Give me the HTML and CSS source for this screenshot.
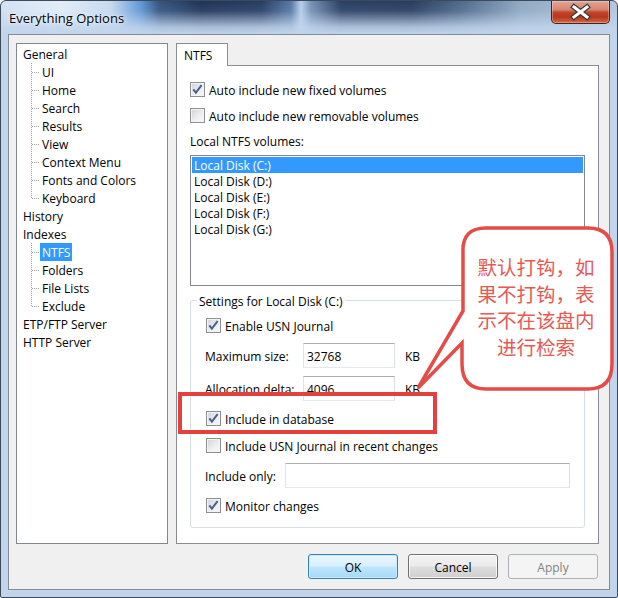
FILE: index.html
```html
<!DOCTYPE html>
<html lang="en">
<head>
<meta charset="utf-8">
<title>Everything Options</title>
<link rel="stylesheet" href="styles.css">
</head>
<body>
<div class="window">
  <div class="titlebar">
    <div class="title">Everything Options</div>
    <div class="close">
      <svg width="59" height="23" viewBox="0 0 59 23">
        <path d="M23 7 L36 17 M36 7 L23 17" stroke="#3a3a3a" stroke-width="5.5" stroke-linecap="square" fill="none"/>
        <path d="M23 7 L36 17 M36 7 L23 17" stroke="#ffffff" stroke-width="3" stroke-linecap="square" fill="none"/>
      </svg>
    </div>
  </div>
  <div class="client">
    <div class="main">
      <div class="tree">
        <ul class="tree-root">
          <li><div class="row"><span class="label">General</span></div>
            <ul class="sub">
              <li><div class="row"><span class="label">UI</span></div></li>
              <li><div class="row"><span class="label">Home</span></div></li>
              <li><div class="row"><span class="label">Search</span></div></li>
              <li><div class="row"><span class="label">Results</span></div></li>
              <li><div class="row"><span class="label">View</span></div></li>
              <li><div class="row"><span class="label">Context Menu</span></div></li>
              <li><div class="row"><span class="label">Fonts and Colors</span></div></li>
              <li><div class="row"><span class="label">Keyboard</span></div></li>
            </ul>
          </li>
          <li><div class="row"><span class="label">History</span></div></li>
          <li><div class="row"><span class="label">Indexes</span></div>
            <ul class="sub">
              <li><div class="row"><span class="label selected">NTFS</span></div></li>
              <li><div class="row"><span class="label">Folders</span></div></li>
              <li><div class="row"><span class="label">File Lists</span></div></li>
              <li><div class="row"><span class="label">Exclude</span></div></li>
            </ul>
          </li>
          <li><div class="row"><span class="label">ETP/FTP Server</span></div></li>
          <li><div class="row"><span class="label">HTTP Server</span></div></li>
        </ul>
      </div>
      <div class="tabctl">
        <div class="tabstrip"><div class="tab">NTFS</div></div>
        <div class="panel">
          <div class="cb-row">
            <span class="cb"><svg width="13" height="13" viewBox="0 0 13 13"><path d="M2.3 6.3 L4.9 9.6 L10.6 2.2" fill="none" stroke="#4b5f8f" stroke-width="2"/></svg></span>
            <span class="txt">Auto include new fixed volumes</span>
          </div>
          <div class="cb-row mt8">
            <span class="cb"></span>
            <span class="txt">Auto include new removable volumes</span>
          </div>
          <div class="caption">Local NTFS volumes:</div>
          <div class="list">
            <div class="item selected">Local Disk (C:)</div>
            <div class="item">Local Disk (D:)</div>
            <div class="item">Local Disk (E:)</div>
            <div class="item">Local Disk (F:)</div>
            <div class="item">Local Disk (G:)</div>
          </div>
          <div class="group">
            <div class="group-title">Settings for Local Disk (C:)</div>
            <div class="cb-row gcb">
              <span class="cb"><svg width="13" height="13" viewBox="0 0 13 13"><path d="M2.3 6.3 L4.9 9.6 L10.6 2.2" fill="none" stroke="#4b5f8f" stroke-width="2"/></svg></span>
              <span class="txt">Enable USN Journal</span>
            </div>
            <div class="field-row">
              <span class="field-label txt">Maximum size:</span>
              <span class="input w92">32768</span>
              <span class="unit txt">KB</span>
            </div>
            <div class="field-row">
              <span class="field-label txt">Allocation delta:</span>
              <span class="input w92">4096</span>
              <span class="unit txt">KB</span>
            </div>
            <div class="cb-row gcb">
              <span class="cb"><svg width="13" height="13" viewBox="0 0 13 13"><path d="M2.3 6.3 L4.9 9.6 L10.6 2.2" fill="none" stroke="#4b5f8f" stroke-width="2"/></svg></span>
              <span class="txt">Include in database</span>
            </div>
            <div class="cb-row gcb">
              <span class="cb"></span>
              <span class="txt">Include USN Journal in recent changes</span>
            </div>
            <div class="field-row">
              <span class="field-label short txt">Include only:</span>
              <span class="input w285"></span>
            </div>
            <div class="cb-row gcb">
              <span class="cb"><svg width="13" height="13" viewBox="0 0 13 13"><path d="M2.3 6.3 L4.9 9.6 L10.6 2.2" fill="none" stroke="#4b5f8f" stroke-width="2"/></svg></span>
              <span class="txt">Monitor changes</span>
            </div>
          </div>
        </div>
      </div>
    </div>
    <div class="buttons">
      <div class="btn btn-default">OK</div>
      <div class="btn">Cancel</div>
      <div class="btn btn-disabled">Apply</div>
    </div>
  </div>

  <div class="annot-box"></div>
  <svg class="callout" width="618" height="598" viewBox="0 0 618 598">
    <path d="M486 228 H588 Q612 228 612 252 V364 Q612 389 588 389 H486 Q462 389 462 364 V343 L418 388 L463 311 V252 Q462 228 486 228 Z" fill="#ffffff" stroke="#e54c48" stroke-width="3.5" stroke-linejoin="miter"/>
  </svg>
  <div class="callout-text">默认打钩，如<br>果不打钩，表<br>示不在该盘内<br>进行检索</div>
</div>
</body>
</html>
```

FILE: styles.css
```css
* { box-sizing: border-box; }
html, body { margin: 0; padding: 0; }
body {
  width: 618px;
  height: 598px;
  overflow: hidden;
  font-family: "Open Sans", "Noto Sans", sans-serif;
  font-size: 12px;
  color: #000;
  background: #fff;
}

.window {
  position: relative;
  width: 618px;
  height: 598px;
  border: 1px solid #3d4a5a;
  border-radius: 6px 6px 2px 2px;
  padding: 0 7px 7px 7px;
  display: flex;
  flex-direction: column;
  background:
    linear-gradient(to bottom, rgba(194,213,237,0) 0px, rgba(194,213,237,0.1) 10px, rgba(194,213,237,0.85) 26px, #c2d5ed 34px),
    linear-gradient(to right, #d3e2f3 0px, #e4eef9 60px, #c6daf0 110px, #5f96d6 140px, #34547f 158px, #1f3356 200px, #263c62 260px, #5677a6 290px, #b9cfea 300px, #7791b6 310px, #2a4062 340px, #283c5e 410px, #4f6a8a 460px, #92a9c3 520px, #b5c8df 618px);
}

.titlebar {
  height: 33px;
  margin: 0 -7px;
  padding-left: 8px;
  display: flex;
  align-items: flex-start;
}
.title {
  margin-top: 8px;
  line-height: 18px;
  font-size: 13px;
  color: #000;
  text-shadow: 0 0 6px rgba(255,255,255,0.9), 0 0 2px rgba(255,255,255,0.7);
}
.close {
  margin-left: auto;
  margin-right: 7px;
  width: 59px;
  height: 23px;
  border: 1px solid #4b2018;
  border-top: none;
  border-radius: 0 0 5px 5px;
  background: linear-gradient(to bottom, #e3a393 0%, #d78873 38%, #c2452b 52%, #b8361c 72%, #d06a46 100%);
  box-shadow: inset 0 0 0 1px rgba(255,255,255,0.3);
}
.close svg { display: block; margin: -1px 0 0 -1px; }

.client {
  height: 556px;
  border: 1px solid #828b97;
  background: #f0f0f0;
  padding: 8px 9px 0 7px;
  display: flex;
  flex-direction: column;
}
.main {
  display: flex;
  gap: 8px;
  height: 501px;
}

/* tree */
.tree {
  width: 152px;
  height: 501px;
  border: 1px solid #828790;
  background: #fff;
  padding-top: 1px;
}
.tree ul { list-style: none; margin: 0; padding: 0; }
.row {
  display: flex;
  align-items: center;
  height: 18px;
  padding-left: 4px;
}
.label {
  padding: 2px 2px 0 2px;
  line-height: 16px;
  white-space: nowrap;
}
.sub {
  background: repeating-linear-gradient(to bottom, #a0a0a0 0 1px, transparent 1px 2px) 14px 0 / 1px calc(100% - 9px) no-repeat;
}
.sub .row { padding-left: 15px; }
.sub .row::before {
  content: "";
  flex: none;
  width: 8px;
  height: 1px;
  background: repeating-linear-gradient(to right, #a0a0a0 0 1px, transparent 1px 2px);
}
.selected { background: #3399ff; color: #fff; }

/* tab */
.tabctl {
  width: 423px;
  display: flex;
  flex-direction: column;
}
.tabstrip { height: 22px; display: flex; }
.tab {
  width: 52px;
  height: 23px;
  border: 1px solid #898c95;
  border-bottom: none;
  background: #fff;
  padding: 2px 0 0 7px;
  line-height: 20px;
  position: relative;
  z-index: 1;
}
.panel {
  flex: 1;
  border: 1px solid #898c95;
  background: #fff;
  padding: 14px 13px 0 13px;
  display: flex;
  flex-direction: column;
}

.cb-row {
  display: flex;
  align-items: center;
  height: 18px;
  gap: 4px;
  white-space: nowrap;
}
.txt { padding-top: 2px; }
.mt8 { margin-top: 8px; }
.cb {
  flex: none;
  width: 15px;
  height: 15px;
  border: 1px solid #8e8f8f;
  background: linear-gradient(135deg, #cfd2d7 0%, #eceef0 55%, #f8f8f8 100%);
  box-shadow: inset 0 0 0 1px #f4f4f4;
}
.cb svg { display: block; }

.caption {
  margin-top: 8px;
  height: 18px;
  padding-top: 2px;
  line-height: 16px;
}
.list {
  margin-top: 5px;
  height: 131px;
  border: 1px solid #828790;
  padding: 1px;
}
.item {
  height: 16px;
  line-height: 14px;
  padding: 2px 0 0 2px;
  white-space: nowrap;
}

/* group */
.group {
  margin-top: 14px;
  height: 228px;
  border: 1px solid #d5dfe5;
  border-radius: 3px;
  padding: 0 13px 12px 14px;
  display: flex;
  flex-direction: column;
  gap: 8px;
}
.group-title {
  align-self: flex-start;
  margin: -9px 0 -2px -8px;
  padding: 2px 2px 0 2px;
  background: #fff;
  line-height: 16px;
  white-space: nowrap;
}
.group .gcb { height: 19px; margin-left: 1px; }
.field-row {
  display: flex;
  align-items: center;
  height: 25px;
  white-space: nowrap;
}
.field-label { width: 98px; }
.field-label.short { width: 80px; }
.input {
  height: 25px;
  border: 1px solid;
  border-color: #abadb3 #dbdfe6 #e3e9ef #e2e3ea;
  padding: 2px 0 0 3px;
  line-height: 21px;
  background: #fff;
}
.w92 { width: 92px; }
.w285 { width: 285px; }
.unit { margin-left: 10px; }

/* buttons */
.buttons {
  display: flex;
  justify-content: flex-end;
  gap: 10px;
  margin-top: 10px;
  padding-right: 2px;
}
.btn {
  width: 90px;
  height: 25px;
  border: 1px solid #707070;
  border-radius: 3px;
  display: flex;
  align-items: center;
  justify-content: center;
  padding-top: 2px;
  background: linear-gradient(to bottom, #f2f2f2 0%, #ebebeb 48%, #dddddd 52%, #cfcfcf 100%);
  box-shadow: inset 0 0 0 1px rgba(255,255,255,0.75);
}
.btn-default {
  border-color: #3c7fb1;
  background: linear-gradient(to bottom, #eaf6fd 0%, #d9f0fc 48%, #bee6fd 52%, #a7d9f5 100%);
  box-shadow: inset 0 0 0 1px #c6ecfc;
}
.btn-disabled {
  border-color: #adb2b5;
  background: #f4f4f4;
  color: #838383;
  box-shadow: none;
}

/* annotation overlays */
.annot-box {
  position: absolute;
  left: 177px;
  top: 391px;
  width: 259px;
  height: 42px;
  border: 4px solid #e2413d;
}
.callout {
  position: absolute;
  left: -1px;
  top: -1px;
  pointer-events: none;
}
.callout-text {
  position: absolute;
  left: 459px;
  top: 253px;
  width: 152px;
  text-align: center;
  font-family: "Noto Sans CJK SC", "Noto Sans", sans-serif;
  font-size: 19.5px;
  line-height: 26.5px;
  color: #e75955;
}
```
